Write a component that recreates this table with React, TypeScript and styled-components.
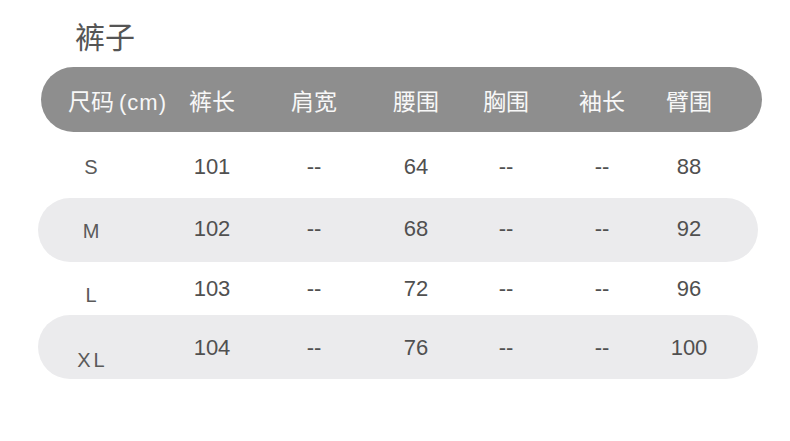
import styled, { createGlobalStyle } from "styled-components";

// column centers, measured from the left edge of the table
const CENTERS = [53, 174, 276, 378, 468, 564, 651];
const TRACKS = CENTERS.reduce<{ edge: number; list: string[] }>(
  (acc, c) => {
    const w = 2 * (c - acc.edge);
    return { edge: acc.edge + w, list: [...acc.list, `${w}px`] };
  },
  { edge: 0, list: [] }
).list.join(" ");

const HEADERS = ["裤长", "肩宽", "腰围", "胸围", "袖长", "臂围"];

const ROWS = [
  { size: "S", values: ["101", "--", "64", "--", "--", "88"], height: 66, band: false, lift: 0, drop: 4 },
  { size: "M", values: ["102", "--", "68", "--", "--", "92"], height: 64, band: true, lift: 6, drop: 9 },
  { size: "L", values: ["103", "--", "72", "--", "--", "96"], height: 53, band: false, lift: 3, drop: 16 },
  { size: "XL", values: ["104", "--", "76", "--", "--", "100"], height: 64, band: true, lift: 2, drop: 28 },
];

const GlobalStyle = createGlobalStyle`
  html, body {
    margin: 0;
    background: #ffffff;
  }
`;

const Page = styled.div`
  width: 790px;
  height: 441px;
  padding: 17px 0 0 38px;
  box-sizing: border-box;
  font-family: "Liberation Sans", "Noto Sans CJK SC", sans-serif;
`;

const Title = styled.h1`
  margin: 0 0 14px 37px;
  font-family: "Noto Sans CJK SC", sans-serif;
  font-size: 30px;
  line-height: 36px;
  font-weight: 400;
  color: #555555;
`;

const Table = styled.div`
  width: 720px;
  display: flex;
  flex-direction: column;
`;

const HeaderBar = styled.div`
  width: 721px;
  height: 65px;
  margin-left: 3px;
  border-radius: 33px;
  background-color: #8e8e8e;
  display: flex;
  align-items: center;
`;

const Grid = styled.div`
  width: 100%;
  display: grid;
  grid-template-columns: ${TRACKS};
  align-items: center;
`;

const HeaderGrid = styled(Grid)`
  margin-left: -3px;
`;

const HeaderCell = styled.div<{ $start?: boolean }>`
  display: flex;
  justify-content: ${(p) => (p.$start ? "flex-start" : "center")};
  padding-left: ${(p) => (p.$start ? "30px" : "0")};
  align-items: baseline;
  white-space: nowrap;
  font-family: "Noto Sans CJK SC", sans-serif;
  font-size: 23px;
  color: #f7f7f7;
`;

const Unit = styled.span`
  margin-left: 5px;
  font-family: "Liberation Sans", sans-serif;
  font-size: 22px;
  letter-spacing: 1px;
`;

const Row = styled(Grid)<{ $height: number; $band: boolean; $lift: number }>`
  height: ${(p) => p.$height}px;
  box-sizing: border-box;
  padding-bottom: ${(p) => p.$lift}px;
  border-radius: 32px;
  background-color: ${(p) => (p.$band ? "#ebebed" : "transparent")};
`;

const Cell = styled.div`
  display: flex;
  justify-content: center;
  padding-top: 3px;
  white-space: nowrap;
  font-size: 22px;
  color: #505050;
`;

const SizeCell = styled(Cell)<{ $drop: number }>`
  padding-top: ${(p) => p.$drop}px;
  padding-left: 3px;
  font-size: 20px;
  letter-spacing: 3px;
  color: #5a5a5a;
`;

export default function App() {
  return (
    <>
      <GlobalStyle />
      <Page>
        <Title>裤子</Title>
        <Table>
          <HeaderBar>
            <HeaderGrid>
              <HeaderCell $start>
                尺码<Unit>(cm)</Unit>
              </HeaderCell>
              {HEADERS.map((h) => (
                <HeaderCell key={h}>{h}</HeaderCell>
              ))}
            </HeaderGrid>
          </HeaderBar>
          {ROWS.map((r) => (
            <Row key={r.size} $height={r.height} $band={r.band} $lift={r.lift}>
              <SizeCell $drop={r.drop}>{r.size}</SizeCell>
              {r.values.map((v, i) => (
                <Cell key={i}>{v}</Cell>
              ))}
            </Row>
          ))}
        </Table>
      </Page>
    </>
  );
}
